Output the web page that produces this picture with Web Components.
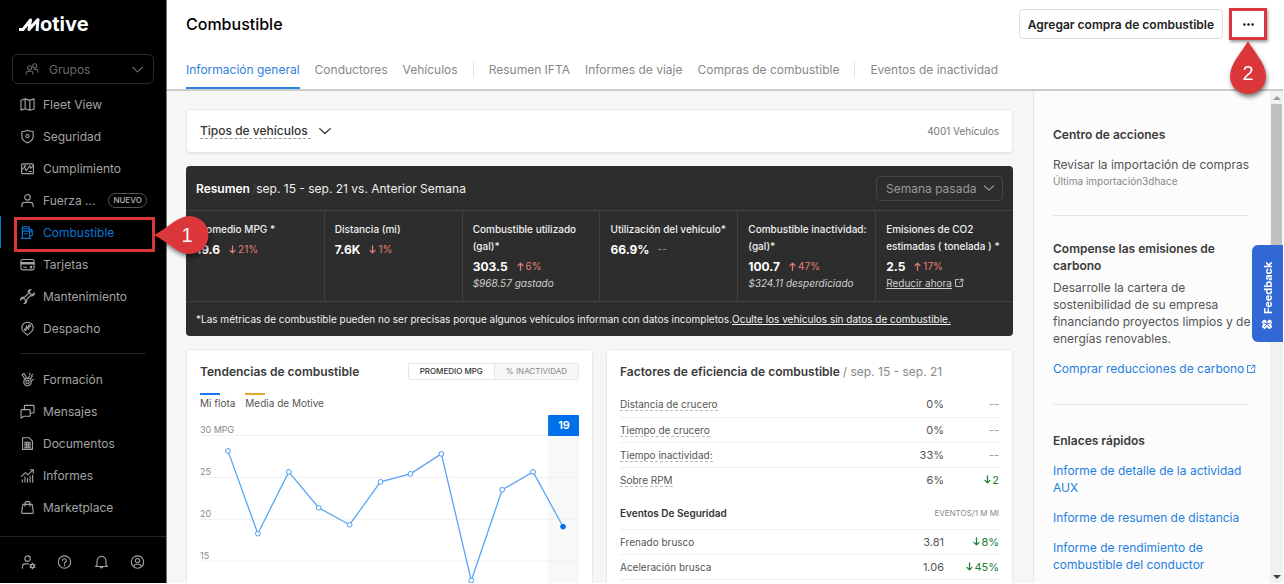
<!DOCTYPE html>
<html lang="es">
<head>
<meta charset="utf-8">
<meta name="viewport" content="width=device-width, initial-scale=1">
<title>Combustible</title>
<style>
  html, body { margin: 0; height: 100%; }
  body { font-family: Inter, "Liberation Sans", sans-serif; font-size: 12px; color: #444; overflow: hidden; }
</style>
</head>
<body>
<fuel-app></fuel-app>
<script>
const BASE = `*, *::before, *::after { box-sizing: border-box; }
  button, select { font: inherit; color: inherit; margin: 0; cursor: pointer; }
  h1, h2, h3, p { margin: 0; font-size: inherit; }
  a { color: inherit; }`;

function define(name, styles, markup) {
  const template = document.createElement('template');
  customElements.define(name, class extends HTMLElement {
    constructor() {
      super();
      this.attachShadow({ mode: 'open' });
      template.innerHTML = `<style>${BASE}${styles}</style>` + (typeof markup === 'function' ? markup(this) : markup);
      this.shadowRoot.append(template.content.cloneNode(true));
    }
  });
}

const ICONS = {
  groups: '<circle cx="5.2" cy="6.6" r="2.3"/><path d="M1.4 14v-1.2c0-1.4 1-2.2 2.3-2.2h3c1.3 0 2.3.8 2.3 2.2V14"/><circle cx="11" cy="4.2" r="2.3"/><path d="M10.3 8.4h2.2c1.3 0 2.2.8 2.2 2.2v1.2"/>',
  map: '<path d="M1 3.4 5.5 2l5 1.6L15 2v10.8l-4.500 1.400-5-1.600L1 14zM5.500 2v10.600M10.500 3.600v10.600"/>',
  shield: '<path d="M8 1.300c2 1 4 1.400 6 1.400v5c0 3.600-2.600 5.800-6 7.100-3.400-1.300-6-3.500-6-7.100v-5c2 0 4-.4 6-1.400z"/><circle cx="8" cy="7.600" r="1.700"/>',
  compliance: '<rect x="1.700" y="3" width="12.600" height="10.500" rx="1"/><path d="M1.700 9.500 5 6.500l1.500 4.200L10.300 5l1 2.700L14.300 5M4.300 5.200h2M9.500 11.200h2.700"/>',
  person: '<circle cx="8" cy="4.600" r="3"/><path d="M2 14.600v-1.500c0-2 1.400-3.100 3.200-3.100h5.600c1.800 0 3.200 1.100 3.200 3.100v1.500"/>',
  fuel: '<path d="M2.500 14V3.200c0-.8.6-1.400 1.400-1.400h4.800c.8 0 1.400.6 1.400 1.400V14M1.500 14.200h9.800M2.500 6.500h7.600M2.500 4h7.600M10.100 4.200l3 1.500v5c0 1.200-1.800 1.200-3 .6M12 5.200v2.300M5 9.300h2.500"/>',
  card: '<rect x="1" y="2.700" width="14" height="11" rx="1.600"/><path d="M1 6h14M1 7.300h14M4 10.900h3"/><circle cx="11.800" cy="10.800" r=".8" fill="currentColor"/>',
  wrench: '<g transform="rotate(45 8 8)"><path d="M6.300 11V5C4.200 4 3.900 1.600 5.300-.3v2.900l2.700 1.500 2.700-1.500V-.3C12.100 1.600 11.800 4 9.700 5v6c2.100 1 2.400 3.400 1 5.300v-2.900L8 11.900l-2.700 1.500v2.900C3.900 14.400 4.200 12 6.300 11z"/></g>',
  dispatch: '<path d="M8 15 3.500 11C.3 7.500 2.500 1.300 8 1.300s7.700 6.200 4.500 9.700z"/><circle cx="5.800" cy="9" r="1"/><circle cx="10.200" cy="5" r="1"/><path d="m6.300 8.100.8-3 1.700 3.800 1-3"/>',
  training: '<circle cx="8" cy="10.700" r="4"/><circle cx="8" cy="10.700" r="1.800"/><path d="M5.200 7.800 2.300 3l2-1.500 3 5.200M8.800 6.700l1-2M11 7.400l2-2.600M12.200 9l2.300-1M10.500 1.500v1.700M13.500 2.500 12.300 4"/>',
  messages: '<path d="M4.700 6V2.200c0-.5.3-.8.8-.8h8.700c.5 0 .8.300.8.800v6.600c0 .5-.3.800-.8.800h-3.300"/><path d="M1.900 6h8.200c.5 0 .8.300.8.800v5.400c0 .5-.3.800-.8.800H4.400L1.100 15V6.800c0-.5.300-.8.800-.8z"/>',
  document: '<path d="M2.700 14.200V1.800h6.800l3.800 3.600v8.800zM4.700 6.600h6.600M4.700 8.600h6.600M4.700 10.600h6.600M4.700 12.500h6.600M6.900 6.600v5.900M9.200 6.600v5.900"/>',
  reports: '<path d="M1.500 9 5.800 5l2.600 2.400L14 2M10.800 1.800h3.400v3.400M2.500 12.500V15M5.300 9.500V15M8 11v4M10.800 9v6M13.500 7.500V15"/>',
  market: '<path d="M3 4.700h10l1.200 8.300c.1.700-.3 1.200-1 1.200H2.800c-.7 0-1.100-.5-1-1.200zM5.300 6.500V4c0-3.300 5.400-3.300 5.400 0v2.500"/>',
  admin: '<circle cx="7" cy="4.400" r="2.900"/><path d="M1.500 14.600v-1.500c0-2 1.200-3.100 3-3.100h3.300"/><circle cx="12.200" cy="12.200" r="1.900" stroke-width="1.600"/><path d="M12.200 9.200v.8M12.200 14.400v.8M9.600 10.700l.7.400M14.100 13.300l.7.400M9.600 13.700l.7-.4M14.100 11.100l.7-.4"/>',
  help: '<circle cx="8" cy="8" r="6.600"/><path d="M6 6.500c0-2.700 4-2.600 4 0 0 1.500-2 1.500-2 3.100M8 11v1"/>',
  bell: '<path d="M3.200 11.300V7.500C3.200 4.500 5.200 2 8 2s4.800 2.500 4.800 5.500v3.800l1.500 1.500H1.700zM6.500 13c.3 1.700 2.700 1.700 3 0"/>',
  account: '<circle cx="8" cy="8" r="6.600"/><circle cx="8" cy="6.500" r="2.300"/><path d="M4 12.500c.3-2.800 7.700-2.800 8 0"/>',
  chevron: '<path d="m2 5.300 6 5.600 6-5.600" stroke-width="1.500"/>',
  external: '<path d="M7 2.500H2.500v11h11V9M9.500 2h4.700v4.700M14 2 8.500 7.500" stroke-width="1.500"/>',
  down: '<path d="M8 1.500v12M3.500 9.500 8 14l4.500-4.500" stroke-width="2.200"/>',
  up: '<path d="M8 14.500v-12M3.500 6.500 8 2l4.500 4.500" stroke-width="2.200"/>',
  dots: '<g fill="currentColor" stroke="none"><circle cx="3" cy="8" r="1.500"/><circle cx="8" cy="8" r="1.500"/><circle cx="13" cy="8" r="1.500"/></g>',
  paw: '<g fill="currentColor" stroke="none"><path d="m1 4 4-3 3 3 3-3 4 3-1.500 3.500L15 11l-3 3-4-2-4 2-3-3 1.500-3.500z"/></g><path d="M4.500 4.500 8 8l3.500-3.500M3.500 9.500 8 8l4.500 1.500M8 8v4" stroke="#3268d3"/>'
};

define('ui-icon', `:host { display: inline-flex; flex: none; width: 16px; height: 16px; }
  svg { width: 100%; height: 100%; display: block; }`,
  el => `<svg viewBox="0 0 16 16" fill="none" stroke="currentColor" stroke-width="1.200" stroke-linejoin="round" stroke-linecap="round" aria-hidden="true">${ICONS[el.getAttribute('name')]}</svg>`);

/* Numbered callout: a drop whose tip points left or up. */
define('step-pin', `:host { display: block; width: 36px; height: 54px; color: #fff; filter: drop-shadow(1px 3px 2px rgba(0,0,0,.5)); font: 20px "Liberation Sans", sans-serif; }
  :host([tip="left"]) { width: 56px; height: 38px; }
  svg { display: block; width: 100%; height: 100%; }`,
  el => el.getAttribute('tip') === 'left'
    ? `<svg viewBox="0 0 56 38"><path fill="#db3639" d="M0 19C10 14 18 6 26 2.500A19 19 0 1 1 26 35.500C18 32 10 24 0 19z"/><text x="33" y="26" text-anchor="middle" fill="#fff">${el.getAttribute('step')}</text></svg>`
    : `<svg viewBox="0 0 36 54"><path fill="#db3639" d="M18 0C23 10 36 22 36 35A18 18 0 0 1 0 35C0 22 13 10 18 0z"/><text x="18" y="39" text-anchor="middle" fill="#fff">${el.getAttribute('step')}</text></svg>`);

define('nav-item', `:host { display: block; position: relative; color: #a3a3a3; }
  a { display: flex; align-items: center; gap: 8px; height: 32px; padding-left: 20px; text-decoration: none; font-size: 12px; }
  ui-icon { width: 15px; height: 15px; }
  :host([current]) { color: #0a78d8; box-shadow: inset 1px 0 #0a78d8; }`,
  el => `<a href="#"><ui-icon name="${el.getAttribute('icon')}"></ui-icon><slot></slot></a><slot name="callout"></slot>`);

define('side-nav', `:host { display: flex; flex-direction: column; background: #000; color: #a3a3a3; border-right: 1px solid #777; position: relative; z-index: 2; }
  .logo { display: flex; align-items: center; height: 24px; margin: 12px 0 18px 19px; color: #fff; font-weight: 700; font-size: 20px; line-height: 24px; }
  .logo svg { width: 21px; height: 24px; }
  .groups { position: relative; display: flex; align-items: center; height: 30px; margin: 0 12px 4px; border: 1px solid #2c2c2c; border-radius: 6px; color: #696969; }
  .groups select { appearance: none; flex: 1; min-width: 0; height: 28px; padding: 0 36px; background: none; border: 0; font-size: 12px; }
  .groups ui-icon { position: absolute; pointer-events: none; width: 14px; height: 14px; }
  .groups ui-icon:first-child { left: 12px; }
  .groups ui-icon:last-child { right: 9px; width: 13px; height: 13px; }
  hr { border: 0; height: 1px; background: #222; margin: 9px 20px; }
  .tag { margin-left: 5px; border: 1px solid #555; border-radius: 8px; padding: 0 4px; font-size: 8px; font-weight: 600; line-height: 13px; }
  .frame { position: absolute; left: 14px; right: 11px; top: 1px; height: 35px; border: 3px solid #db3639; }
  .pin { position: absolute; left: 154px; top: 0; }
  footer { margin-top: auto; display: flex; justify-content: space-between; padding: 17px 21px 13px; border-top: 1px solid #222; }
  footer button { display: flex; padding: 0; border: 0; background: none; }
  footer ui-icon { width: 15px; height: 16px; }`,
  `<div class="logo" role="img" aria-label="Motive"><svg viewBox="0 0 21 24" fill="none" stroke="#fff" stroke-width="3" stroke-linejoin="round" aria-hidden="true"><path d="M0 17.500h4L11.500 8 10 17.500 19 7.500l-1 11.500"/></svg><span>otive</span></div>
  <div class="groups"><ui-icon name="groups"></ui-icon><select aria-label="Grupos"><option>Grupos</option></select><ui-icon name="chevron"></ui-icon></div>
  <nav>
    <nav-item icon="map">Fleet View</nav-item>
    <nav-item icon="shield">Seguridad</nav-item>
    <nav-item icon="compliance">Cumplimiento</nav-item>
    <nav-item icon="person">Fuerza ...<span class="tag">NUEVO</span></nav-item>
    <nav-item icon="fuel" current>Combustible<div slot="callout" class="frame"></div><step-pin slot="callout" class="pin" tip="left" step="1"></step-pin></nav-item>
    <nav-item icon="card">Tarjetas</nav-item>
    <nav-item icon="wrench">Mantenimiento</nav-item>
    <nav-item icon="dispatch">Despacho</nav-item>
    <hr>
    <nav-item icon="training">Formación</nav-item>
    <nav-item icon="messages">Mensajes</nav-item>
    <nav-item icon="document">Documentos</nav-item>
    <nav-item icon="reports">Informes</nav-item>
    <nav-item icon="market">Marketplace</nav-item>
  </nav>
  <footer>
    <button aria-label="Administrar"><ui-icon name="admin"></ui-icon></button>
    <button aria-label="Ayuda"><ui-icon name="help"></ui-icon></button>
    <button aria-label="Notificaciones"><ui-icon name="bell"></ui-icon></button>
    <button aria-label="Cuenta"><ui-icon name="account"></ui-icon></button>
  </footer>`);

define('page-header', `:host { display: block; background: #fff; border-bottom: 2px solid #ccc; padding: 9px 16px 0 19px; position: relative; z-index: 1; }
  .top { display: flex; align-items: center; height: 30px; }
  h1 { flex: 1; font-size: 16px; font-weight: 500; color: #000; }
  .add { height: 30px; padding: 0 8px; border: 1px solid #ddd; border-radius: 4px; background: #fff; color: #222; font-weight: 600; font-size: 12px; }
  .more { position: relative; margin-left: 6px; }
  .more button { display: flex; align-items: center; justify-content: center; width: 38px; height: 32px; padding: 0; border: 3px solid #db3639; background: #fff; color: #111; box-shadow: 1px 2px 3px rgba(0,0,0,.4); }
  .more ui-icon { width: 13px; height: 13px; }
  .more step-pin { position: absolute; left: 1px; top: 33px; }
  nav { display: flex; align-items: center; gap: 15px; height: 50px; color: #888; font-size: 12px; white-space: nowrap; }
  nav a { display: flex; align-items: center; height: 50px; padding-top: 11px; text-decoration: none; }
  nav a.on { color: #2e7fdb; box-shadow: inset 0 -2px #2e84e6; }
  nav i { width: 1px; height: 17px; margin-top: 11px; background: #e4e4e4; }`,
  `<div class="top"><h1>Combustible</h1><button class="add">Agregar compra de combustible</button>
    <div class="more"><button aria-label="Más opciones"><ui-icon name="dots"></ui-icon></button><step-pin step="2"></step-pin></div></div>
  <nav><a href="#" class="on">Información general</a><a href="#">Conductores</a><a href="#">Vehículos</a><i></i><a href="#">Resumen IFTA</a><a href="#">Informes de viaje</a><a href="#">Compras de combustible</a><i></i><a href="#">Eventos de inactividad</a></nav>`);

const CARD = `background: #fff; border: 1px solid #e9e9e9; border-radius: 4px; box-shadow: 0 1px 1px rgba(0,0,0,.08);`;

define('vehicle-filter', `:host { display: flex; align-items: center; justify-content: space-between; height: 44px; padding: 0 13px; ${CARD} }
  button { display: flex; align-items: center; gap: 7px; padding: 0; border: 0; background: none; font-size: 12px; font-weight: 500; color: #333; }
  button span { border-bottom: 1px dashed #999; line-height: 15px; padding-right: 3px; }
  ui-icon { width: 14px; height: 14px; }
  p { font-size: 10px; color: #777; }`,
  `<button><span>Tipos de vehículos</span><ui-icon name="chevron"></ui-icon></button><p>4001 Vehículos</p>`);

define('metric-cell', `:host { display: block; padding: 10px 8px 0 10px; }
  h3 { font-size: 10px; font-weight: 500; line-height: 17px; color: #f0f0f0; }
  .value { display: flex; align-items: center; gap: 8px; margin-top: 1px; height: 20px; font-size: 12px; font-weight: 700; color: #fff; }
  .change { display: flex; align-items: center; gap: 1px; font-size: 10px; font-weight: 400; color: #e57f76; }
  .change.none { color: #999; }
  .change ui-icon { width: 9px; height: 9px; }
  .note { font-size: 10px; line-height: 14px; color: #d0d0d0; }`,
  el => {
    const dir = el.getAttribute('trend');
    return `<h3><slot></slot></h3><div class="value"><span>${el.getAttribute('value')}</span><span class="change ${dir ? '' : 'none'}">${dir ? `<ui-icon name="${dir}"></ui-icon>` : ''}${el.getAttribute('change')}</span></div><div class="note"><slot name="note"></slot></div>`;
  });

define('fuel-summary', `:host { display: block; background: #2d2d2d; color: #f0f0f0; border-radius: 4px; }
  header { display: flex; align-items: center; height: 44px; padding: 0 10px; font-size: 12px; }
  h2 { font-weight: 600; color: #fff; }
  h2 + i { margin: 0 0 0 2px; color: #484848; font-style: normal; }
  header p { flex: 1; }
  .period { position: relative; display: flex; align-items: center; }
  select { appearance: none; height: 25px; width: 127px; padding: 0 9px; background: none; border: 1px solid #454545; border-radius: 4px; color: #999; font-size: 12px; }
  .period ui-icon { position: absolute; right: 8px; width: 12px; height: 12px; color: #999; pointer-events: none; }
  .cells { display: grid; grid-template-columns: repeat(6, 1fr); min-height: 92px; border: solid #414141; border-width: 1px 0; }
  metric-cell + metric-cell { border-left: 1px solid #414141; }
  footer { height: 34px; padding: 0 10px; display: flex; align-items: center; font-size: 10px; white-space: nowrap; }
  em { font-style: italic; }
  .ext { display: inline-flex; align-items: center; gap: 2px; }
  .ext ui-icon { width: 10px; height: 10px; }`,
  `<header><h2>Resumen</h2><i>/</i><p>sep. 15 - sep. 21 vs. Anterior Semana</p>
    <div class="period"><select aria-label="Periodo"><option>Semana pasada</option></select><ui-icon name="chevron"></ui-icon></div></header>
  <div class="cells">
    <metric-cell value="19.6" trend="down" change="21%">Promedio MPG *</metric-cell>
    <metric-cell value="7.6K" trend="down" change="1%">Distancia (mi)</metric-cell>
    <metric-cell value="303.5" trend="up" change="6%">Combustible utilizado (gal)*<em slot="note">$968.57 gastado</em></metric-cell>
    <metric-cell value="66.9%" change="--">Utilización del vehículo*</metric-cell>
    <metric-cell value="100.7" trend="up" change="47%">Combustible inactividad: (gal)*<em slot="note">$324.11 desperdiciado</em></metric-cell>
    <metric-cell value="2.5" trend="up" change="17%">Emisiones de CO2 estimadas ( tonelada ) *<span slot="note" class="ext"><a href="#">Reducir ahora</a><ui-icon name="external"></ui-icon></span></metric-cell>
  </div>
  <footer><span>*Las métricas de combustible pueden no ser precisas porque algunos vehículos informan con datos incompletos.</span><a href="#">Oculte los vehículos sin datos de combustible.</a></footer>`);

const POINTS = [[28,36],[58,119],[89,57],[119,93],[150,110],[181,67],[211,59],[242,39],[272,166],[303,75],[334,57],[364,112]];

define('fuel-trends', `:host { display: block; padding: 13px; ${CARD} }
  header { display: flex; align-items: center; justify-content: space-between; height: 17px; }
  h2 { font-size: 12px; font-weight: 600; color: #3a3a3a; }
  .toggle { display: flex; height: 17px; border: 1px solid #e6e6e6; border-radius: 2px; }
  .toggle button { border: 0; padding: 0 11px; background: #fff; color: #333; font-size: 8px; font-weight: 500; line-height: 15px; }
  .toggle button + button { border-left: 1px solid #e6e6e6; background: #f7f7f7; color: #888; font-weight: 400; }
  ul { display: flex; gap: 10px; margin: 13px 0 3px; padding: 0; list-style: none; font-size: 10px; line-height: 17px; color: #555; }
  li::before { content: ""; display: block; width: 20px; height: 2px; background: var(--key); }
  svg { display: block; width: 100%; overflow: visible; }
  text { font-size: 9px; fill: #888; }`,
  `<header><h2>Tendencias de combustible</h2><div class="toggle"><button>PROMEDIO MPG</button><button>% INACTIVIDAD</button></div></header>
  <ul><li style="--key:#1878f0">Mi flota</li><li style="--key:#e5a52b">Media de Motive</li></ul>
  <svg viewBox="0 0 380 230">
    <rect x="349" y="21" width="31" height="209" fill="#f8f8f8"/>
    <path d="M0 20.500h380M0 62.500h380M0 104.500h380M0 146.500h380M0 188.500h380" stroke="#f0f0f0"/>
    <rect x="349" width="31" height="21" rx="1" fill="#0070ea"/>
    <text x="365" y="14" text-anchor="middle" style="fill:#fff;font-size:11px;font-weight:600">19</text>
    <text y="18">30 MPG</text><text y="60">25</text><text y="102">20</text><text y="144">15</text>
    <polyline points="${POINTS.join(' ')}" fill="none" stroke="#5aa5f2" stroke-width="1.300"/>
    ${POINTS.map(([x, y], i) => `<circle cx="${x}" cy="${y}" r="2.400" fill="${i === 11 ? '#0070ea' : '#fff'}" stroke="${i === 11 ? '#0070ea' : '#4a9bf0'}"/>`).join('')}
  </svg>`);

const row = (label, value, change, hint) => `<tr><th scope="row"><span class="${hint ? 'hint' : ''}">${label}</span></th><td>${value}</td><td class="${change === '--' ? 'none' : 'good'}">${change === '--' ? '' : '<ui-icon name="down"></ui-icon>'}${change}</td></tr>`;

define('efficiency-factors', `:host { display: block; padding: 13px; ${CARD} }
  h2 { font-size: 12px; font-weight: 600; line-height: 17px; color: #3a3a3a; white-space: nowrap; }
  h2 span { font-weight: 400; color: #888; }
  table { width: 100%; margin-top: 12px; border-collapse: collapse; font-size: 10px; color: #555; }
  tr { height: 25px; border-bottom: 1px solid #f0f0f0; }
  tr.last { border: 0; }
  th, td { padding: 0; font-weight: 400; text-align: right; }
  th { text-align: left; }
  td { font-size: 11px; }
  td:last-child { width: 55px; }
  .hint { border-bottom: 1px dashed #bbb; }
  .none { color: #999; } .good { color: #1c7d36; }
  .good ui-icon { width: 9px; height: 9px; }
  .group { height: 37px; }
  .group th { padding-top: 6px; font-weight: 600; font-size: 10px; color: #333; }
  .group th + th { text-align: right; font-weight: 400; font-size: 8px; color: #888; }`,
  `<h2>Factores de eficiencia de combustible <span>/ sep. 15 - sep. 21</span></h2>
  <table><tbody>
    ${row('Distancia de crucero', '0%', '--', 1)}${row('Tiempo de crucero', '0%', '--', 1)}${row('Tiempo inactividad:', '33%', '--', 1)}${row('Sobre RPM', '6%', '2', 1).replace('<tr>', '<tr class="last">')}
    <tr class="group"><th>Eventos De Seguridad</th><th colspan="2">EVENTOS/1 M MI</th></tr>
    ${row('Frenado brusco', '3.81', '8%')}${row('Aceleración brusca', '1.06', '45%')}
  </tbody></table>`);

define('action-panel', `:host { display: block; padding: 35px 21px 0 19px; background: #fcfcfc; border-left: 1px solid #e6e6e6; font-size: 12px; line-height: 17px; color: #555; overflow: hidden; }
  h2 { font-weight: 600; color: #3a3a3a; }
  small { display: block; font-size: 10px; color: #888; }
  hr { border: 0; height: 1px; background: #e6e6e6; }
  .tasks + hr { margin: 25px 0 24px; }
  .offset + hr { margin: 27px 0; }
  a { color: #1f7fe0; text-decoration: none; }
  .tasks p { margin-top: 13px; }
  .offset p { margin: 5px -6px 13px 0; }
  .offset a { display: flex; align-items: center; gap: 2px; white-space: nowrap; }
  .offset ui-icon { width: 10px; height: 10px; }
  .links a { display: block; margin-top: 13px; }`,
  `<section class="tasks"><h2>Centro de acciones</h2><p>Revisar la importación de compras</p><small>Última importación3dhace</small></section>
  <hr>
  <section class="offset"><h2>Compense las emisiones de carbono</h2><p>Desarrolle la cartera de sostenibilidad de su empresa financiando proyectos limpios y de energías renovables.</p><a href="#">Comprar reducciones de carbono<ui-icon name="external"></ui-icon></a></section>
  <hr>
  <section class="links"><h2>Enlaces rápidos</h2><a href="#">Informe de detalle de la actividad AUX</a><a href="#">Informe de resumen de distancia</a><a href="#">Informe de rendimiento de combustible del conductor</a></section>`);

define('scroll-track', `:host { display: flex; flex-direction: column; align-items: center; background: #f1f1f1; padding-bottom: 4px; }
  i { border: 4px solid transparent; border-top-width: 0; border-bottom-color: #999; margin: 5px 0 4px; }
  b { width: 11px; height: 32%; background: #c1c1c1; }
  i:last-child { margin: auto 0 0; border-width: 4px 4px 0; border-top-color: #444; }`, `<i></i><b></b><i></i>`);

define('feedback-tab', `:host { position: absolute; right: 0; top: 42%; z-index: 3; }
  button { display: flex; align-items: center; gap: 4px; width: 31px; height: 97px; padding: 12px 0; border: 0; border-radius: 0 6px 6px 0; background: #3268d3; color: #fff; font-size: 11px; font-weight: 700; writing-mode: vertical-rl; transform: rotate(180deg); }
  ui-icon { width: 12px; height: 12px; }`, `<button><ui-icon name="paw"></ui-icon>Feedback</button>`);

define('fuel-app', `:host { display: grid; grid-template-columns: 167px minmax(0, 1fr); box-sizing: border-box; height: 100vh; position: relative; border: solid #fff; border-width: 0 1px 1px 0; overflow: hidden; }
  .page { display: flex; flex-direction: column; min-height: 0; }
  .body { flex: 1; min-height: 0; display: grid; grid-template-columns: minmax(0, 1fr) 237px 13px; background: #f6f6f6; }
  main { display: flex; flex-direction: column; gap: 13px; padding: 18px 20px 0 19px; min-height: 0; overflow: hidden; }
  main > * { flex: none; }
  .cards { display: grid; grid-template-columns: 1fr 1fr; gap: 13px; }`,
  `<side-nav></side-nav>
  <div class="page"><page-header></page-header>
    <div class="body">
      <main><vehicle-filter></vehicle-filter><fuel-summary></fuel-summary><div class="cards"><fuel-trends></fuel-trends><efficiency-factors></efficiency-factors></div></main>
      <action-panel></action-panel><scroll-track></scroll-track>
    </div></div>
  <feedback-tab></feedback-tab>`);
</script>
</body>
</html>
